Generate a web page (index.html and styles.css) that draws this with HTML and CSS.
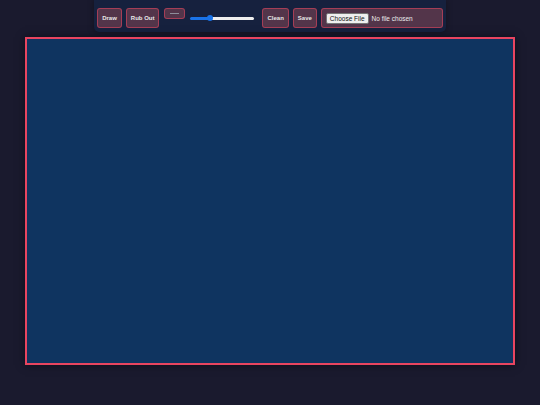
FILE: index.html
```html
<!DOCTYPE html>
<html>
<head>
<meta charset="utf-8">
<link rel="stylesheet" href="styles.css">
</head>
<body>
<div class="toolbar">
  <button class="btn">Draw</button>
  <button class="btn">Rub Out</button>
  <span class="swatch"><span class="swatch-line"></span></span>
  <input class="range" type="range" min="1" max="50" value="15">
  <button class="btn">Clean</button>
  <button class="btn">Save</button>
  <span class="file-box">
    <span class="file-btn">Choose File</span>
    <span class="file-text">No file chosen</span>
  </span>
</div>
<div class="canvas"></div>
</body>
</html>
```
FILE: styles.css
```css
html, body {
  margin: 0;
  padding: 0;
  background: #1a1a2e;
  height: 100%;
}
body {
  font-family: "Liberation Sans", Arial, sans-serif;
  display: flex;
  flex-direction: column;
  align-items: center;
}
.toolbar {
  display: flex;
  align-items: center;
  gap: 4px;
  background: #16213e;
  padding: 8px 3px 4px 3px;
  border-radius: 0 0 5px 5px;
  box-shadow: 0 0 6px rgba(0,0,0,0.35);
  height: 20px;
}
.btn {
  height: 20px;
  padding: 0 4px;
  margin: 0;
  background: #53354a;
  color: #e8e8e8;
  border: 1px solid rgba(233,69,96,0.55);
  border-radius: 3px;
  font-family: "Liberation Sans", Arial, sans-serif;
  font-size: 6px;
  font-weight: bold;
  box-sizing: border-box;
}
.swatch {
  align-self: flex-start;
  width: 21px;
  height: 11px;
  box-sizing: border-box;
  background: #53354a;
  border: 1px solid rgba(233,69,96,0.55);
  border-radius: 3px;
  display: flex;
  align-items: center;
  justify-content: center;
  margin-left: 1px;
}
.swatch-line {
  display: block;
  width: 9px;
  height: 1px;
  background: #8e8e9a;
}
.range {
  -webkit-appearance: none;
  appearance: none;
  width: 64px;
  height: 3px;
  margin: 0 4px 0 1px;
  border-radius: 2px;
  background: linear-gradient(to right, #1a73e8 0, #1a73e8 28%, #eeeeee 28%, #eeeeee 100%);
}
.range::-webkit-slider-thumb {
  -webkit-appearance: none;
  appearance: none;
  width: 6px;
  height: 6px;
  border-radius: 50%;
  background: #1a73e8;
  border: none;
}
.file-box {
  display: flex;
  align-items: center;
  gap: 3px;
  height: 20px;
  width: 122px;
  box-sizing: border-box;
  padding: 0 4px;
  background: #53354a;
  border: 1px solid rgba(233,69,96,0.55);
  border-radius: 3px;
  color: #ececec;
  font-size: 6.5px;
}
.file-btn {
  background: #efefef;
  color: #111;
  border: 1px solid #767676;
  border-radius: 2px;
  padding: 1px 3px;
  line-height: 7px;
  font-size: 6.5px;
}
.file-text {
  font-size: 6.5px;
}
.canvas {
  margin-top: 5px;
  width: 486px;
  height: 324px;
  background: #0f3460;
  border: 2px solid #e94560;
  box-shadow: 0 0 8px rgba(0,0,0,0.5);
  flex: none;
}
```
